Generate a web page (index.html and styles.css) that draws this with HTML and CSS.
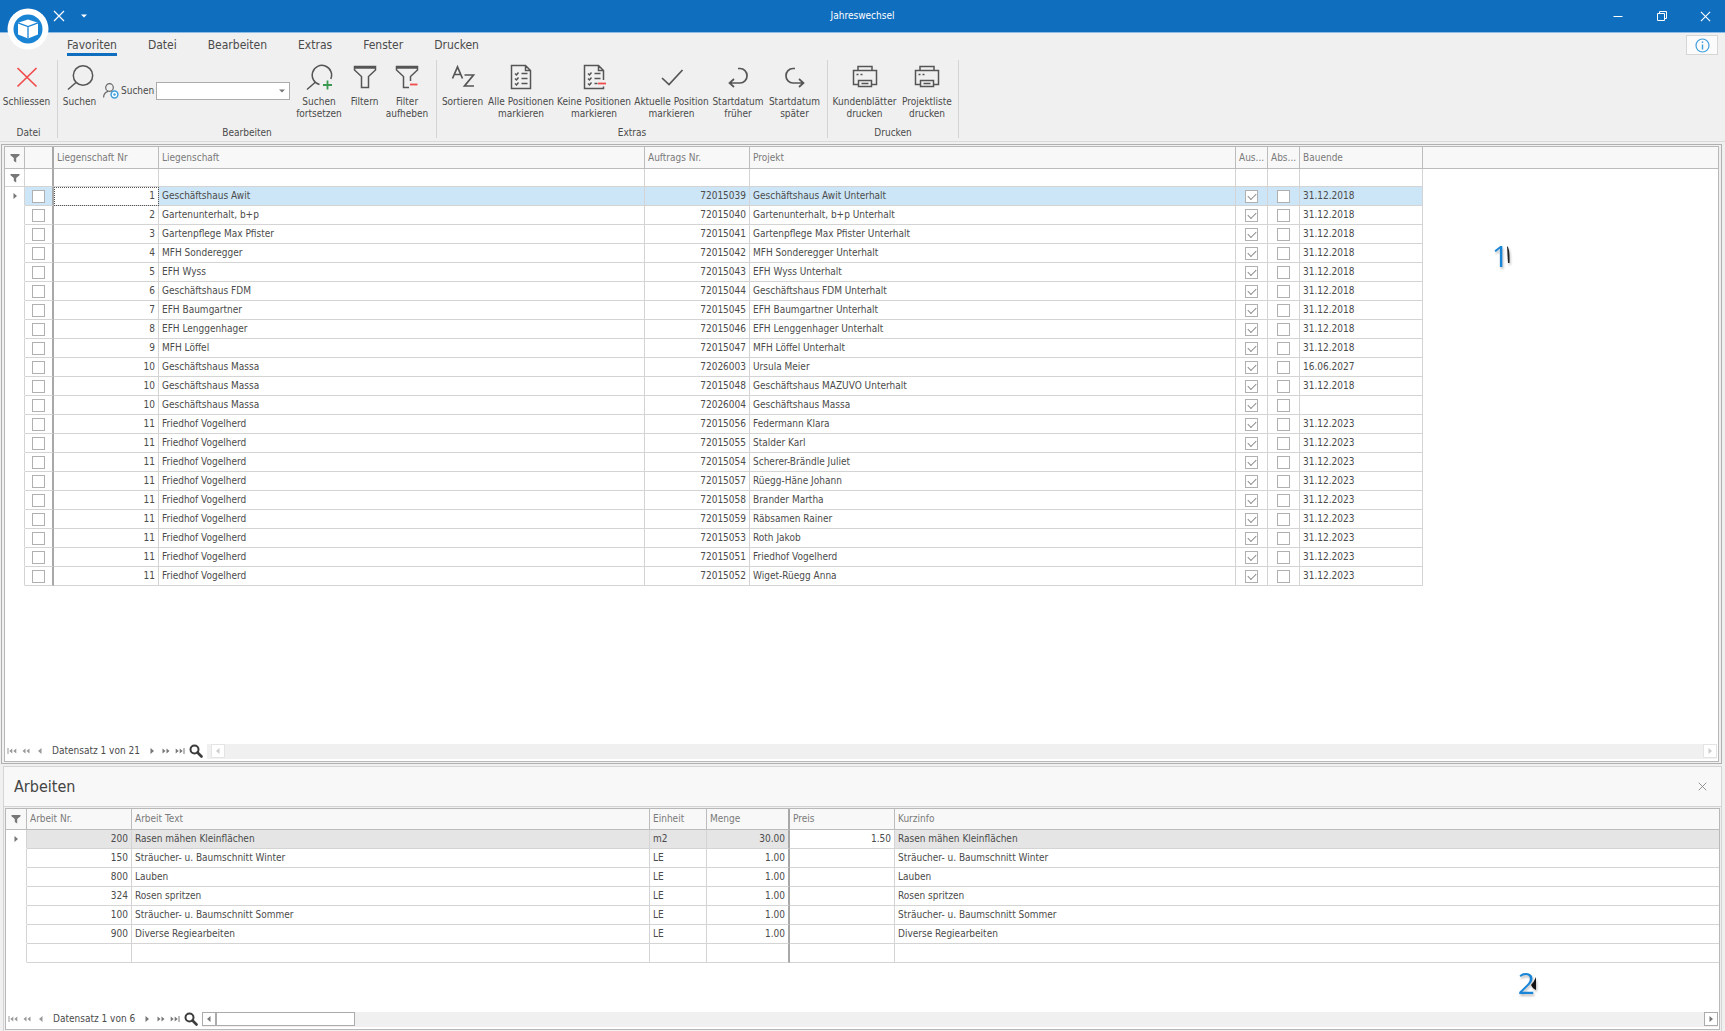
FILE: index.html
```html
<!DOCTYPE html>
<html lang="de">
<head>
<meta charset="utf-8">
<meta name="viewport" content="width=device-width, initial-scale=1">
<title>Jahreswechsel</title>
<link rel="stylesheet" href="styles.css">
</head>
<body>
<svg class="sprite" aria-hidden="true">
  <symbol id="i-funnel-small" viewBox="0 0 10 10"><path d="M0.500 1h9v1.200L6.200 5v4.500L3.800 8V5L.5 2.200z" fill="currentColor"/></symbol>
  <symbol id="i-caret-right" viewBox="0 0 10 10"><path d="M3.500 2l3.500 3-3.500 3z" fill="currentColor"/></symbol>
  <symbol id="i-caret-left" viewBox="0 0 10 10"><path d="M6.500 2L3 5l3.500 3z" fill="currentColor"/></symbol>
  <symbol id="i-first" viewBox="0 0 10 10"><path d="M1 2v6" stroke="currentColor"/><path d="M5.300 2.500L2.300 5l3 2.500zM9.300 2.500L6.300 5l3 2.500z" fill="currentColor"/></symbol>
  <symbol id="i-prev2" viewBox="0 0 10 10"><path d="M4.500 2.500L1.500 5l3 2.500zM8.500 2.500L5.500 5l3 2.500z" fill="currentColor"/></symbol>
  <symbol id="i-next2" viewBox="0 0 10 10"><path d="M1.500 2.500L4.500 5l-3 2.500zM5.500 2.500L8.500 5l-3 2.500z" fill="currentColor"/></symbol>
  <symbol id="i-last" viewBox="0 0 10 10"><path d="M.7 2.500L3.700 5l-3 2.500zM4.700 2.500L7.700 5l-3 2.500z" fill="currentColor"/><path d="M9 2v6" stroke="currentColor"/></symbol>
  <symbol id="i-find" viewBox="0 0 14 14"><circle cx="5.500" cy="5.500" r="4" fill="none" stroke="currentColor" stroke-width="2"/><path d="M8.500 8.500l4 4" stroke="currentColor" stroke-width="2.600" stroke-linecap="round"/></symbol>
  <symbol id="i-close" viewBox="0 0 12 12"><path d="M1 1l10 10M11 1L1 11" fill="none" stroke="currentColor" stroke-width="1.200"/></symbol>
</svg>

<div class="app">
  <header class="titlebar">
    <div class="quick">
      <button class="plain" aria-label="Schliessen"><svg width="12" height="12"><use href="#i-close"/></svg></button>
      <button class="plain" aria-label="Schnellzugriff anpassen"><svg width="6" height="4" viewBox="0 0 6 4"><path d="M0 .5h6L3 3.500z" fill="#fff"/></svg></button>
    </div>
    <h1 class="apptitle">Jahreswechsel</h1>
    <div class="wincontrols">
      <button class="plain" aria-label="Minimieren"><svg width="12" height="12" viewBox="0 0 12 12"><path d="M1.500 6.500h9" stroke="#fff"/></svg></button>
      <button class="plain" aria-label="Wiederherstellen"><svg width="12" height="12" viewBox="0 0 12 12"><path d="M1.500 3.500h7v7h-7zM3.500 3.500v-2h7v7h-2" fill="none" stroke="#fff"/></svg></button>
      <button class="plain" aria-label="Fenster schliessen"><svg width="11" height="11"><use href="#i-close"/></svg></button>
    </div>
  </header>
  <button class="logo" aria-label="Anwendungsmenü">
    <svg width="42" height="42" viewBox="0 0 42 42"><circle cx="21" cy="21" r="20.500" fill="#fff"/><circle cx="21" cy="21" r="14.500" fill="#1a84d4"/><path d="M21 11.500l10 3.300v11.700L21 30.500l-10-4V14.800z" fill="#fff"/><path d="M11 14.800l10 3.700 10-3.700M21 18.500v12" fill="none" stroke="#1a84d4" stroke-width="1.300"/></svg>
  </button>

  <nav class="tabs">
    <a class="tab active" href="#favoriten">Favoriten</a>
    <a class="tab" href="#datei">Datei</a>
    <a class="tab" href="#bearbeiten">Bearbeiten</a>
    <a class="tab" href="#extras">Extras</a>
    <a class="tab" href="#fenster">Fenster</a>
    <a class="tab" href="#drucken">Drucken</a>
    <button class="info" aria-label="Info"><svg width="15" height="15" viewBox="0 0 15 15"><circle cx="7.500" cy="7.500" r="6.500" fill="none" stroke="#3f9fdc" stroke-width="1.200"/><path d="M7.500 6.500v5M7.500 3.500v1.500" stroke="#3f9fdc" stroke-width="1.400"/></svg></button>
  </nav>

  <div class="ribbon">
    <section class="group">
      <div class="tools tools-file">
        <button class="tool"><svg width="28" height="28" viewBox="0 0 28 28"><path d="M4.500 5l19 18.500M23.500 5l-19 18.500" stroke="#f04c4c" stroke-width="1.700"/></svg>Schliessen</button>
      </div>
      <h2>Datei</h2>
    </section>
    <section class="group">
      <div class="tools tools-edit">
        <button class="tool"><svg class="ink" width="28" height="28" viewBox="0 0 28 28"><circle cx="17" cy="12.500" r="9.700"/><path d="M10 19.500l-8 7"/></svg>Suchen</button>
        <div class="combo">
          <svg width="16" height="16" viewBox="0 0 16 16"><g fill="none" stroke="#666" stroke-width="1.200"><circle cx="6.500" cy="4.500" r="3.800"/><path d="M.6 14.500c0-3.500 2-5.500 4.400-6.200M8.500 8.300l1.500.8"/></g><circle cx="11.500" cy="11.500" r="3.400" fill="#fff" stroke="#3f9fdc" stroke-width="1.500"/><circle cx="11.500" cy="11.500" r="1.200" fill="#3f9fdc"/></svg>
          <label for="suchen">Suchen</label>
          <span class="selectbox"><select id="suchen"><option></option></select><svg width="6" height="4" viewBox="0 0 6 4"><path d="M0 .5h6L3 3.500z" fill="#777"/></svg></span>
        </div>
        <button class="tool"><svg class="ink" width="28" height="28" viewBox="0 0 28 28"><path d="M14.500 21.500A9.700 9.700 0 1 1 25.800 16M10 19.500l-8 7"/><path d="M22.500 17.500v9M18 22h9" stroke="#3a9a52" stroke-width="1.800"/></svg>Suchen<br>fortsetzen</button>
        <button class="tool"><svg class="ink" width="28" height="28" viewBox="0 0 28 28"><path d="M3.500 3.500h21V7l-7 6.500v11h-7v-11L3.500 7zM3.500 5h21"/></svg>Filtern</button>
        <button class="tool"><svg class="ink" width="28" height="28" viewBox="0 0 28 28"><path d="M14 24.500h-3.500v-11L3.500 7V3.500h21V7l-7 6.500V18M3.500 5h21M14 24.500h2"/><path d="M17 21.500h7.500" stroke="#f04c4c" stroke-width="1.800"/></svg>Filter<br>aufheben</button>
      </div>
      <h2>Bearbeiten</h2>
    </section>
    <section class="group">
      <div class="tools tools-extras">
        <button class="tool"><svg class="ink" width="28" height="28" viewBox="0 0 28 28"><path d="M3.500 15.500L8.500 4l5 11.500M5.200 11.500h6.600M15.500 12h9l-9 11h9.500" stroke-width="1.700"/></svg>Sortieren</button>
        <button class="tool"><svg class="ink" width="28" height="28" viewBox="0 0 28 28"><path d="M4.500 2.500h14l5 5v18h-19zM18.500 2.500v5h5M8 10.500l1.500 1.500 2-2.500M14.500 10.500h6M8 15.500l1.500 1.500 2-2.500M14.500 15.500h6M8 20.500l1.500 1.500 2-2.500M14.500 20.500h6"/></svg>Alle Positionen<br>markieren</button>
        <button class="tool"><svg class="ink" width="28" height="28" viewBox="0 0 28 28"><path d="M23.500 17V7.500l-5-5h-14v23h19v-2M18.500 2.500v5h5M8 10.500l1.500 1.500 2-2.500M14.500 10.500h6M8 15.500l1.500 1.500 2-2.500M14.500 15.500h6M8 20.500l1.500 1.500 2-2.500M14.500 20.500h3"/><path d="M18 20.500h8" stroke="#f04c4c" stroke-width="1.800"/></svg>Keine Positionen<br>markieren</button>
        <button class="tool"><svg class="ink" width="28" height="28" viewBox="0 0 28 28"><path d="M4 15l7 6.500L24.500 7" stroke-width="1.700"/></svg>Aktuelle Position<br>markieren</button>
        <button class="tool"><svg class="ink" width="28" height="28" viewBox="0 0 28 28"><path d="M14 5.500h2a7 7.200 0 0 1 0 14.500H6M10 16l-4.500 4 4.500 4" stroke-width="1.700"/></svg>Startdatum<br>früher</button>
        <button class="tool"><svg class="ink" width="28" height="28" viewBox="0 0 28 28"><path d="M14 5.500h-2a7 7.200 0 0 0 0 14.500h10M18 16l4.500 4-4.500 4" stroke-width="1.700"/></svg>Startdatum<br>später</button>
      </div>
      <h2>Extras</h2>
    </section>
    <section class="group">
      <div class="tools tools-print">
        <button class="tool"><svg class="ink" width="28" height="28" viewBox="0 0 28 28"><path d="M7 7.500v-4h14v4M7 21.500H2.500v-14h23v14H21M7.500 17.500h13v6h-13zM10.500 20.500h7M5.500 11.500h2M9.500 11.500h2"/></svg>Kundenblätter<br>drucken</button>
        <button class="tool"><svg class="ink" width="28" height="28" viewBox="0 0 28 28"><path d="M7 7.500v-4h14v4M7 21.500H2.500v-14h23v14H21M7.500 17.500h13v6h-13zM10.500 20.500h7M5.500 11.500h2M9.500 11.500h2"/></svg>Projektliste<br>drucken</button>
      </div>
      <h2>Drucken</h2>
    </section>
  </div>

  <main class="main">
    <div class="grid-panel">
      <table class="grid grid-projects">
        <colgroup><col class="w-ind"><col class="w-sel"><col class="w-nr"><col class="w-name"><col class="w-nr"><col class="w-name"><col class="w-flag"><col class="w-flag"><col class="w-date"><col></colgroup>
        <thead>
          <tr><th class="ind"><svg width="10" height="10"><use href="#i-funnel-small"/></svg></th><th class="fix"></th><th>Liegenschaft Nr</th><th>Liegenschaft</th><th>Auftrags Nr.</th><th>Projekt</th><th>Aus...</th><th>Abs...</th><th>Bauende</th><th class="fill"></th></tr>
        </thead>
        <tbody>
          <tr class="filter"><td class="ind"><svg width="10" height="10"><use href="#i-funnel-small"/></svg></td><td class="fix"></td><td></td><td></td><td></td><td></td><td></td><td></td><td></td><td class="fill"></td></tr>
          <tr class="current"><td class="ind"><svg width="10" height="10"><use href="#i-caret-right"/></svg></td><td class="fix"><input type="checkbox" aria-label="Zeile markieren"></td><td class="num focus">1</td><td>Geschäftshaus Awit</td><td class="num">72015039</td><td>Geschäftshaus Awit Unterhalt</td><td class="flag"><input type="checkbox" aria-label="Aus" checked></td><td class="flag"><input type="checkbox" aria-label="Abs"></td><td>31.12.2018</td><td class="fill"></td></tr>
          <tr><td class="ind"></td><td class="fix"><input type="checkbox" aria-label="Zeile markieren"></td><td class="num">2</td><td>Gartenunterhalt, b+p</td><td class="num">72015040</td><td>Gartenunterhalt, b+p Unterhalt</td><td class="flag"><input type="checkbox" aria-label="Aus" checked></td><td class="flag"><input type="checkbox" aria-label="Abs"></td><td>31.12.2018</td><td class="fill"></td></tr>
          <tr><td class="ind"></td><td class="fix"><input type="checkbox" aria-label="Zeile markieren"></td><td class="num">3</td><td>Gartenpflege Max Pfister</td><td class="num">72015041</td><td>Gartenpflege Max Pfister Unterhalt</td><td class="flag"><input type="checkbox" aria-label="Aus" checked></td><td class="flag"><input type="checkbox" aria-label="Abs"></td><td>31.12.2018</td><td class="fill"></td></tr>
          <tr><td class="ind"></td><td class="fix"><input type="checkbox" aria-label="Zeile markieren"></td><td class="num">4</td><td>MFH Sonderegger</td><td class="num">72015042</td><td>MFH Sonderegger Unterhalt</td><td class="flag"><input type="checkbox" aria-label="Aus" checked></td><td class="flag"><input type="checkbox" aria-label="Abs"></td><td>31.12.2018</td><td class="fill"></td></tr>
          <tr><td class="ind"></td><td class="fix"><input type="checkbox" aria-label="Zeile markieren"></td><td class="num">5</td><td>EFH Wyss</td><td class="num">72015043</td><td>EFH Wyss Unterhalt</td><td class="flag"><input type="checkbox" aria-label="Aus" checked></td><td class="flag"><input type="checkbox" aria-label="Abs"></td><td>31.12.2018</td><td class="fill"></td></tr>
          <tr><td class="ind"></td><td class="fix"><input type="checkbox" aria-label="Zeile markieren"></td><td class="num">6</td><td>Geschäftshaus FDM</td><td class="num">72015044</td><td>Geschäftshaus FDM Unterhalt</td><td class="flag"><input type="checkbox" aria-label="Aus" checked></td><td class="flag"><input type="checkbox" aria-label="Abs"></td><td>31.12.2018</td><td class="fill"></td></tr>
          <tr><td class="ind"></td><td class="fix"><input type="checkbox" aria-label="Zeile markieren"></td><td class="num">7</td><td>EFH Baumgartner</td><td class="num">72015045</td><td>EFH Baumgartner Unterhalt</td><td class="flag"><input type="checkbox" aria-label="Aus" checked></td><td class="flag"><input type="checkbox" aria-label="Abs"></td><td>31.12.2018</td><td class="fill"></td></tr>
          <tr><td class="ind"></td><td class="fix"><input type="checkbox" aria-label="Zeile markieren"></td><td class="num">8</td><td>EFH Lenggenhager</td><td class="num">72015046</td><td>EFH Lenggenhager Unterhalt</td><td class="flag"><input type="checkbox" aria-label="Aus" checked></td><td class="flag"><input type="checkbox" aria-label="Abs"></td><td>31.12.2018</td><td class="fill"></td></tr>
          <tr><td class="ind"></td><td class="fix"><input type="checkbox" aria-label="Zeile markieren"></td><td class="num">9</td><td>MFH Löffel</td><td class="num">72015047</td><td>MFH Löffel Unterhalt</td><td class="flag"><input type="checkbox" aria-label="Aus" checked></td><td class="flag"><input type="checkbox" aria-label="Abs"></td><td>31.12.2018</td><td class="fill"></td></tr>
          <tr><td class="ind"></td><td class="fix"><input type="checkbox" aria-label="Zeile markieren"></td><td class="num">10</td><td>Geschäftshaus Massa</td><td class="num">72026003</td><td>Ursula Meier</td><td class="flag"><input type="checkbox" aria-label="Aus" checked></td><td class="flag"><input type="checkbox" aria-label="Abs"></td><td>16.06.2027</td><td class="fill"></td></tr>
          <tr><td class="ind"></td><td class="fix"><input type="checkbox" aria-label="Zeile markieren"></td><td class="num">10</td><td>Geschäftshaus Massa</td><td class="num">72015048</td><td>Geschäftshaus MAZUVO Unterhalt</td><td class="flag"><input type="checkbox" aria-label="Aus" checked></td><td class="flag"><input type="checkbox" aria-label="Abs"></td><td>31.12.2018</td><td class="fill"></td></tr>
          <tr><td class="ind"></td><td class="fix"><input type="checkbox" aria-label="Zeile markieren"></td><td class="num">10</td><td>Geschäftshaus Massa</td><td class="num">72026004</td><td>Geschäftshaus Massa</td><td class="flag"><input type="checkbox" aria-label="Aus" checked></td><td class="flag"><input type="checkbox" aria-label="Abs"></td><td></td><td class="fill"></td></tr>
          <tr><td class="ind"></td><td class="fix"><input type="checkbox" aria-label="Zeile markieren"></td><td class="num">11</td><td>Friedhof Vogelherd</td><td class="num">72015056</td><td>Federmann Klara</td><td class="flag"><input type="checkbox" aria-label="Aus" checked></td><td class="flag"><input type="checkbox" aria-label="Abs"></td><td>31.12.2023</td><td class="fill"></td></tr>
          <tr><td class="ind"></td><td class="fix"><input type="checkbox" aria-label="Zeile markieren"></td><td class="num">11</td><td>Friedhof Vogelherd</td><td class="num">72015055</td><td>Stalder Karl</td><td class="flag"><input type="checkbox" aria-label="Aus" checked></td><td class="flag"><input type="checkbox" aria-label="Abs"></td><td>31.12.2023</td><td class="fill"></td></tr>
          <tr><td class="ind"></td><td class="fix"><input type="checkbox" aria-label="Zeile markieren"></td><td class="num">11</td><td>Friedhof Vogelherd</td><td class="num">72015054</td><td>Scherer-Brändle Juliet</td><td class="flag"><input type="checkbox" aria-label="Aus" checked></td><td class="flag"><input type="checkbox" aria-label="Abs"></td><td>31.12.2023</td><td class="fill"></td></tr>
          <tr><td class="ind"></td><td class="fix"><input type="checkbox" aria-label="Zeile markieren"></td><td class="num">11</td><td>Friedhof Vogelherd</td><td class="num">72015057</td><td>Rüegg-Häne Johann</td><td class="flag"><input type="checkbox" aria-label="Aus" checked></td><td class="flag"><input type="checkbox" aria-label="Abs"></td><td>31.12.2023</td><td class="fill"></td></tr>
          <tr><td class="ind"></td><td class="fix"><input type="checkbox" aria-label="Zeile markieren"></td><td class="num">11</td><td>Friedhof Vogelherd</td><td class="num">72015058</td><td>Brander Martha</td><td class="flag"><input type="checkbox" aria-label="Aus" checked></td><td class="flag"><input type="checkbox" aria-label="Abs"></td><td>31.12.2023</td><td class="fill"></td></tr>
          <tr><td class="ind"></td><td class="fix"><input type="checkbox" aria-label="Zeile markieren"></td><td class="num">11</td><td>Friedhof Vogelherd</td><td class="num">72015059</td><td>Räbsamen Rainer</td><td class="flag"><input type="checkbox" aria-label="Aus" checked></td><td class="flag"><input type="checkbox" aria-label="Abs"></td><td>31.12.2023</td><td class="fill"></td></tr>
          <tr><td class="ind"></td><td class="fix"><input type="checkbox" aria-label="Zeile markieren"></td><td class="num">11</td><td>Friedhof Vogelherd</td><td class="num">72015053</td><td>Roth Jakob</td><td class="flag"><input type="checkbox" aria-label="Aus" checked></td><td class="flag"><input type="checkbox" aria-label="Abs"></td><td>31.12.2023</td><td class="fill"></td></tr>
          <tr><td class="ind"></td><td class="fix"><input type="checkbox" aria-label="Zeile markieren"></td><td class="num">11</td><td>Friedhof Vogelherd</td><td class="num">72015051</td><td>Friedhof Vogelherd</td><td class="flag"><input type="checkbox" aria-label="Aus" checked></td><td class="flag"><input type="checkbox" aria-label="Abs"></td><td>31.12.2023</td><td class="fill"></td></tr>
          <tr><td class="ind"></td><td class="fix"><input type="checkbox" aria-label="Zeile markieren"></td><td class="num">11</td><td>Friedhof Vogelherd</td><td class="num">72015052</td><td>Wiget-Rüegg Anna</td><td class="flag"><input type="checkbox" aria-label="Aus" checked></td><td class="flag"><input type="checkbox" aria-label="Abs"></td><td>31.12.2023</td><td class="fill"></td></tr>
        </tbody>
      </table>
      <span class="marker marker-one">1<svg width="8" height="26" viewBox="0 0 8 26"><path d="M2 2q3 2 2.500 17H3z" fill="#222"/></svg></span>
      <div class="navigator">
        <button class="plain dim" aria-label="Erster"><svg width="10" height="10"><use href="#i-first"/></svg></button>
        <button class="plain dim" aria-label="Seite zurück"><svg width="10" height="10"><use href="#i-prev2"/></svg></button>
        <button class="plain dim" aria-label="Zurück"><svg width="10" height="10"><use href="#i-caret-left"/></svg></button>
        <span class="count">Datensatz 1 von 21</span>
        <button class="plain" aria-label="Weiter"><svg width="10" height="10"><use href="#i-caret-right"/></svg></button>
        <button class="plain" aria-label="Seite vor"><svg width="10" height="10"><use href="#i-next2"/></svg></button>
        <button class="plain" aria-label="Letzter"><svg width="10" height="10"><use href="#i-last"/></svg></button>
        <button class="plain find" aria-label="Suchen"><svg width="14" height="14"><use href="#i-find"/></svg></button>
        <div class="scroll inactive">
          <button class="arrow" aria-label="Nach links"><svg width="10" height="10"><use href="#i-caret-left"/></svg></button>
          <button class="arrow end" aria-label="Nach rechts"><svg width="10" height="10"><use href="#i-caret-right"/></svg></button>
        </div>
      </div>
    </div>
  </main>

  <section class="works">
    <header class="works-head">
      <h2>Arbeiten</h2>
      <button class="plain" aria-label="Arbeiten schliessen"><svg width="9" height="9"><use href="#i-close"/></svg></button>
    </header>
    <div class="works-body">
      <table class="grid grid-works">
        <colgroup><col class="w-ind2"><col class="w-nr"><col class="w-text"><col class="w-unit"><col class="w-qty"><col class="w-nr"><col></colgroup>
        <thead>
          <tr><th class="ind"><svg width="10" height="10"><use href="#i-funnel-small"/></svg></th><th>Arbeit Nr.</th><th>Arbeit Text</th><th>Einheit</th><th class="fix">Menge</th><th>Preis</th><th class="last">Kurzinfo</th></tr>
        </thead>
        <tbody>
          <tr class="selected"><td class="ind"><svg width="10" height="10"><use href="#i-caret-right"/></svg></td><td class="num">200</td><td>Rasen mähen Kleinflächen</td><td>m2</td><td class="num fix">30.00</td><td class="num edit">1.50</td><td class="last">Rasen mähen Kleinflächen</td></tr>
          <tr><td class="ind"></td><td class="num">150</td><td>Sträucher- u. Baumschnitt Winter</td><td>LE</td><td class="num fix">1.00</td><td></td><td class="last">Sträucher- u. Baumschnitt Winter</td></tr>
          <tr><td class="ind"></td><td class="num">800</td><td>Lauben</td><td>LE</td><td class="num fix">1.00</td><td></td><td class="last">Lauben</td></tr>
          <tr><td class="ind"></td><td class="num">324</td><td>Rosen spritzen</td><td>LE</td><td class="num fix">1.00</td><td></td><td class="last">Rosen spritzen</td></tr>
          <tr><td class="ind"></td><td class="num">100</td><td>Sträucher- u. Baumschnitt Sommer</td><td>LE</td><td class="num fix">1.00</td><td></td><td class="last">Sträucher- u. Baumschnitt Sommer</td></tr>
          <tr><td class="ind"></td><td class="num">900</td><td>Diverse Regiearbeiten</td><td>LE</td><td class="num fix">1.00</td><td></td><td class="last">Diverse Regiearbeiten</td></tr>
          <tr><td class="ind"></td><td></td><td></td><td></td><td class="fix"></td><td></td><td class="last"></td></tr>
        </tbody>
      </table>
      <span class="marker marker-two">2<svg width="8" height="26" viewBox="0 0 8 26"><path d="M5 6v13q-4-2-5-5 3-3 5-8z" fill="#111"/></svg></span>
      <div class="navigator">
        <button class="plain dim" aria-label="Erster"><svg width="10" height="10"><use href="#i-first"/></svg></button>
        <button class="plain dim" aria-label="Seite zurück"><svg width="10" height="10"><use href="#i-prev2"/></svg></button>
        <button class="plain dim" aria-label="Zurück"><svg width="10" height="10"><use href="#i-caret-left"/></svg></button>
        <span class="count">Datensatz 1 von 6</span>
        <button class="plain" aria-label="Weiter"><svg width="10" height="10"><use href="#i-caret-right"/></svg></button>
        <button class="plain" aria-label="Seite vor"><svg width="10" height="10"><use href="#i-next2"/></svg></button>
        <button class="plain" aria-label="Letzter"><svg width="10" height="10"><use href="#i-last"/></svg></button>
        <button class="plain find" aria-label="Suchen"><svg width="14" height="14"><use href="#i-find"/></svg></button>
        <div class="scroll">
          <button class="arrow" aria-label="Nach links"><svg width="10" height="10"><use href="#i-caret-left"/></svg></button>
          <span class="thumb"></span>
          <button class="arrow end" aria-label="Nach rechts"><svg width="10" height="10"><use href="#i-caret-right"/></svg></button>
        </div>
      </div>
    </div>
  </section>
</div>
</body>
</html>
```
FILE: styles.css
```css
* { box-sizing: border-box; }

body {
  margin: 0;
  background: #f0f0f0;
  color: #4b4b4b;
  font: 10px/12px "DejaVu Sans Condensed", "DejaVu Sans", sans-serif;
}

h1, h2 { margin: 0; font-weight: normal; }
button, select { font: inherit; color: inherit; }
svg { display: block; }
.sprite { display: none; }

.plain {
  display: flex;
  padding: 0;
  border: 0;
  background: none;
  color: inherit;
}

.app {
  position: relative;
  display: flex;
  flex-direction: column;
  min-height: 100vh;
}

/* Title bar */
.titlebar {
  display: grid;
  grid-template-columns: 1fr auto 1fr;
  align-items: center;
  height: 33px;
  border-bottom: 1px solid #8dbde6;
  background: #106ebe;
  color: #fff;
}
.quick { display: flex; align-items: center; gap: 16px; padding-left: 53px; }
.apptitle { font-size: 10px; }
.wincontrols {
  display: flex;
  align-items: center;
  justify-content: flex-end;
  gap: 32px;
  padding-right: 14px;
}
.logo {
  position: absolute;
  top: 8px;
  left: 7px;
  padding: 0;
  border: 0;
  border-radius: 50%;
  background: none;
}

/* Tabs */
.tabs {
  display: flex;
  align-items: flex-start;
  gap: 31px;
  height: 27px;
  padding: 2px 7px 0 67px;
}
.tab {
  height: 21px;
  color: #4b4b4b;
  font-size: 12px;
  line-height: 20px;
  text-decoration: none;
}
.tab.active { border-bottom: 3px solid #106ebe; }
.info {
  display: grid;
  place-items: center;
  width: 32px;
  height: 20px;
  margin-left: auto;
  padding: 0;
  border: 1px solid #d6d6d6;
  background: #fbfbfb;
}

/* Ribbon */
.ribbon {
  display: flex;
  height: 82px;
  padding-bottom: 3px;
  border-bottom: 1px solid #dadada;
}
.group {
  display: flex;
  flex-direction: column;
  justify-content: space-between;
  border-right: 1px solid #d4d4d4;
}
.group h2 { font-size: 10px; line-height: 10px; text-align: center; }
.tools { display: grid; align-items: start; }
.tools-file { grid-template-columns: 53px; padding-right: 4px; }
.tools-edit { grid-template-columns: 43px 191px 54px 37px 48px; padding-right: 5px; }
.tools-extras { grid-template-columns: 51px 66px 80px 75px 58px 55px; padding-right: 5px; }
.tools-print { grid-template-columns: 73px 52px; padding-right: 5px; }
.tool {
  padding: 3px 0 0;
  border: 0;
  background: none;
  line-height: 12px;
  text-align: center;
  white-space: nowrap;
}
.tool svg { margin: 0 auto 5px; }
.ink { fill: none; stroke: #555; stroke-width: 1.5; }
.combo {
  display: flex;
  align-items: center;
  gap: 2px;
  padding: 22px 2px 0;
}
.combo label { width: 33px; }
.selectbox { display: grid; flex: 1; align-items: center; }
.selectbox select {
  grid-area: 1 / 1;
  width: 100%;
  height: 18px;
  border: 1px solid #ababab;
  border-radius: 0;
  background: #fff;
  appearance: none;
}
.selectbox svg { grid-area: 1 / 1; justify-self: end; margin-right: 5px; pointer-events: none; }

/* Project grid */
.main {
  display: flex;
  flex: 1;
  margin: 2px 3px 2px 1px;
  padding: 1px 2px;
  border: 1px solid #b0b0b0;
}
.grid-panel {
  position: relative;
  display: flex;
  flex: 1;
  flex-direction: column;
  min-width: 0;
  border: 1px solid #b8b8b8;
  background: #fff;
}

.grid {
  width: 100%;
  border-collapse: separate;
  border-spacing: 0;
  table-layout: fixed;
}
.grid th, .grid td {
  height: 19px;
  padding: 0 3px;
  overflow: hidden;
  border-right: 1px solid #d4d4d4;
  border-bottom: 1px solid #d4d4d4;
  font-weight: normal;
  line-height: 14px;
  text-align: left;
  white-space: nowrap;
}
.grid th {
  height: 21px;
  border-right-color: #bcbcbc;
  border-bottom-color: #bcbcbc;
  background: #f8f8f8;
  color: #7a7a7a;
}
.grid-projects th { height: 22px; }
.grid .filter td { height: 18px; }
.grid td.num { text-align: right; }
.grid .ind { padding: 0; color: #777; }
.grid td.ind { border-bottom-color: #fff; }
.grid .filter .ind { border-bottom-color: #d4d4d4; }
.grid .ind svg { margin: 0 auto; }
.grid .fix { border-right: 2px solid #a8a8a8; }
.grid td.fill { border: 0; }
.grid th.fill, .grid .last { border-right: 0; }
.current td:not(.ind, .fill) { background: #cde6f7; }
.grid .current .focus { background: #fff; outline: 1px dotted #555; outline-offset: -1px; }
.selected td:not(.ind) { background: #e5e5e5; }
.grid .selected .edit { background: #fff; }

.w-ind { width: 20px; }
.w-sel { width: 29px; }
.w-nr { width: 105px; }
.w-name { width: 486px; }
.w-flag { width: 32px; }
.w-date { width: 123px; }
.w-ind2 { width: 21px; }
.w-text { width: 518px; }
.w-unit { width: 57px; }
.w-qty { width: 83px; }

.grid input {
  display: block;
  width: 13px;
  height: 13px;
  margin: 0 auto;
  border: 1px solid #b0b0b0;
  background: #fff;
  appearance: none;
}
.grid input:checked::before {
  display: block;
  width: 7px;
  height: 4px;
  margin: 2px;
  border: solid #8a8a8a;
  border-width: 0 0 1px 1px;
  content: "";
  transform: rotate(-45deg);
}

/* Record navigator */
.navigator {
  display: flex;
  align-items: center;
  gap: 4px;
  height: 20px;
  margin-top: auto;
  padding: 0 1px 0 2px;
  color: #777;
}
.navigator .dim { color: #999; }
.count { padding: 0 3px; color: #4b4b4b; }
.find { color: #3c3c3c; }
.scroll {
  display: flex;
  flex: 1;
  height: 15px;
  background: #f0f0f0;
}
.arrow {
  display: grid;
  place-items: center;
  width: 14px;
  height: 14px;
  padding: 0;
  border: 1px solid #ababab;
  background: #fff;
}
.arrow.end { margin-left: auto; }
.inactive .arrow { border-color: #e4e4e4; color: #ccc; }
.inactive { padding-left: 4px; }
.thumb { width: 139px; height: 14px; border: 1px solid #ababab; background: #fff; }

/* Works panel */
.works {
  display: flex;
  flex-direction: column;
  margin: 0 3px;
  border: 1px solid #d4d4d4;
  border-bottom: 0;
}
.works-head {
  display: flex;
  align-items: center;
  justify-content: space-between;
  height: 40px;
  padding: 0 14px 0 10px;
  border-bottom: 1px solid #d4d4d4;
  background: #f8f8f8;
  color: #888;
}
.works-head h2 { color: #444; font-size: 16px; line-height: 20px; }
.works-body {
  position: relative;
  display: flex;
  flex-direction: column;
  min-height: 222px;
  margin: 1px;
  border: 1px solid #b8b8b8;
  background: #fff;
}

/* Numbered callouts over the grids */
.marker {
  position: absolute;
  display: flex;
  color: #1a86d8;
  font: 30px/36px "Open Sans", sans-serif;
  filter: drop-shadow(1px 2px 1px #bbb);
}
.marker svg { margin: 6px 0 0 -4px; }
.marker-one { top: 91px; right: 205px; }
.marker-two { right: 180px; bottom: 28px; }
```
